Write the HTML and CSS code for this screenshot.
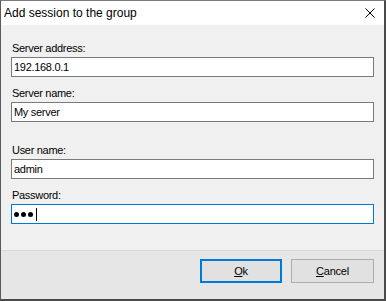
FILE: index.html
```html
<!DOCTYPE html>
<html lang="en">
<head>
  <meta charset="UTF-8">
  <title>Add session to the group</title>
  <link rel="stylesheet" href="styles.css">
</head>
<body>
  <div class="window">
    <div class="titlebar">
      <span class="title">Add session to the group</span>
      <span class="close">
        <svg width="10" height="10" viewBox="0 0 10 10">
          <path d="M0.5 0.5 L9.5 9.5 M9.5 0.5 L0.5 9.5" stroke="#000" stroke-width="1" fill="none"/>
        </svg>
      </span>
    </div>

    <div class="content">
      <div class="field">
        <label for="address">Server address:</label>
        <input id="address" class="textbox" value="192.168.0.1">
      </div>
      <div class="field">
        <label for="name">Server name:</label>
        <input id="name" class="textbox" value="My server">
      </div>
      <div class="field spaced">
        <label for="user">User name:</label>
        <input id="user" class="textbox" value="admin">
      </div>
      <div class="field">
        <label>Password:</label>
        <div class="textbox focused">
          <span class="dot"></span><span class="dot"></span><span class="dot"></span><span class="caret"></span>
        </div>
      </div>
    </div>

    <div class="footer">
      <button class="btn default"><u>O</u>k</button>
      <button class="btn"><u>C</u>ancel</button>
    </div>
  </div>
</body>
</html>
```

FILE: styles.css
```css
body {
  margin: 0;
  font-family: "Liberation Sans", Arial, sans-serif;
  background-color: #f0f0f0;
}

.window {
  box-sizing: border-box;
  width: 386px;
  height: 301px;
  display: flex;
  flex-direction: column;
  border-left: 1px solid #5a5a5a;
  border-top: 1px solid #7a7a7a;
  border-right: 2px solid #4a4a4a;
  border-bottom: 2px solid #4a4a4a;
  background-color: #f0f0f0;
}

.titlebar {
  height: 24px;
  display: flex;
  align-items: center;
  justify-content: space-between;
  padding: 0 9px 0 3px;
  background-color: #fff;
  font-size: 12px;
  color: #000;
}

.close {
  display: flex;
}

.content {
  flex: 1;
  padding: 15px 10px 0 10px;
}

.field {
  margin-top: 8px;
}

.field:first-child {
  margin-top: 0;
}

.field.spaced {
  margin-top: 20px;
}

label {
  display: block;
  font-size: 11px;
  letter-spacing: -0.3px;
  line-height: 16px;
  margin-bottom: 1px;
  padding-left: 1px;
  color: #000;
}

.textbox {
  box-sizing: border-box;
  display: flex;
  align-items: center;
  width: 100%;
  height: 20px;
  margin: 0;
  padding: 0 2px;
  border: 1px solid #7a7a7a;
  background-color: #fff;
  font-family: "Liberation Sans", Arial, sans-serif;
  font-size: 11px;
  letter-spacing: -0.3px;
  color: #000;
  outline: none;
}

.textbox.focused {
  border-color: #0078d7;
}

.dot {
  width: 5px;
  height: 5px;
  border-radius: 50%;
  background-color: #000;
  margin-right: 2px;
}

.caret {
  width: 1px;
  height: 13px;
  background-color: #000;
  margin-left: 1px;
}

.footer {
  height: 40px;
  display: flex;
  justify-content: flex-end;
  align-items: flex-start;
  gap: 9px;
  padding: 8px 10px 0 0;
  border-top: 1px solid #dadada;
  background-color: #e6e6e6;
}

.btn {
  box-sizing: border-box;
  width: 83px;
  height: 24px;
  padding: 0;
  border: 1px solid #adadad;
  background-color: #e1e1e1;
  font-family: "Liberation Sans", Arial, sans-serif;
  font-size: 11px;
  letter-spacing: -0.2px;
  color: #000;
}

.btn.default {
  width: 82px;
  border: 2px solid #0078d7;
}
```
